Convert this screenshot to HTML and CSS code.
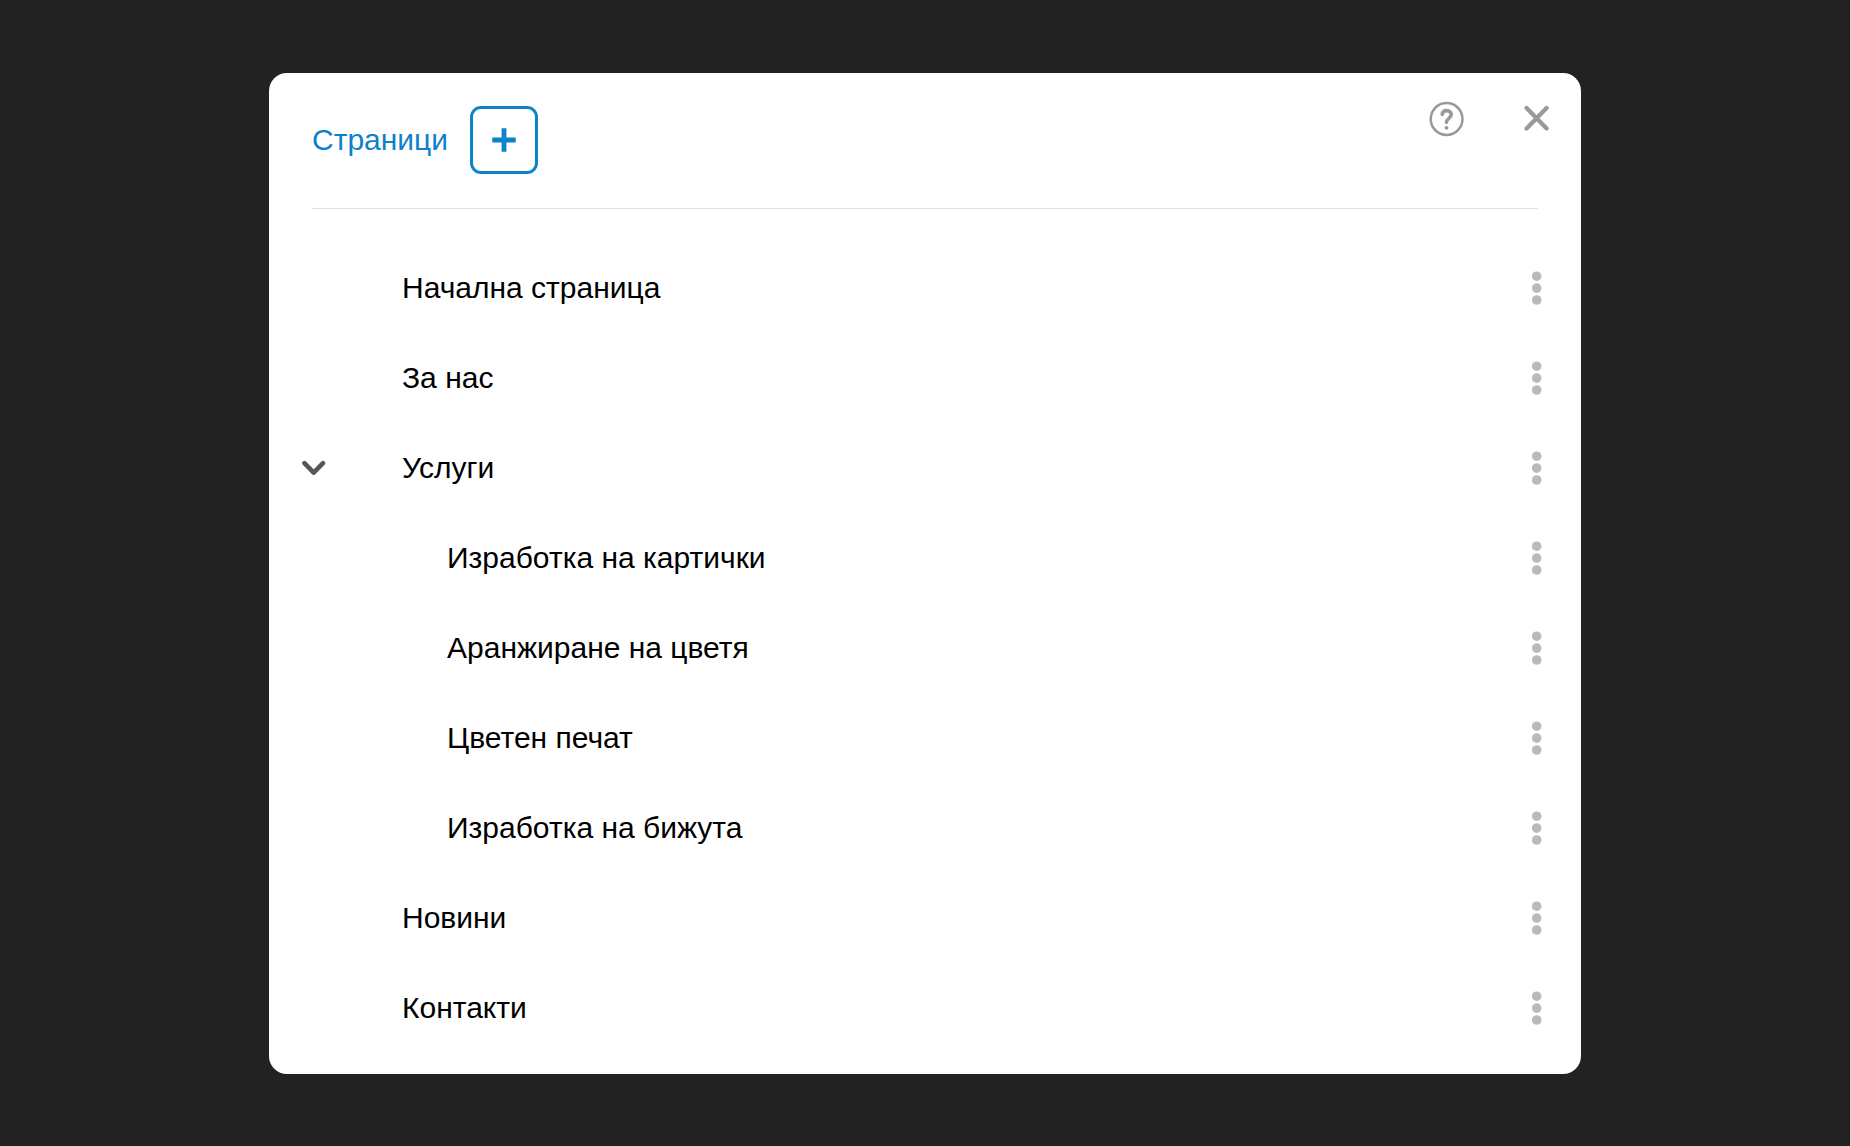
FILE: index.html
```html
<!DOCTYPE html>
<html lang="bg">
<head>
<meta charset="utf-8">
<meta name="viewport" content="width=device-width, initial-scale=1">
<title>Страници</title>
<link rel="stylesheet" href="styles.css">
</head>
<body>
<svg class="sprite" aria-hidden="true">
  <symbol id="dots" viewBox="0 0 10 34">
    <circle cx="4.7" cy="5.2" r="4.8"/><circle cx="4.7" cy="17.1" r="4.8"/><circle cx="4.7" cy="29" r="4.8"/>
  </symbol>
</svg>
<main class="panel">
  <header class="panel-header">
    <div class="heading">
      <h1 class="title">Страници</h1>
      <button class="add-button" type="button" aria-label="Добави страница">
        <svg width="24" height="24" viewBox="0 0 24 24"><path d="M12 0.3V23.7M0.3 12H23.7" fill="none" stroke="currentColor" stroke-width="4.8"/></svg>
      </button>
    </div>
    <div class="actions">
      <button class="icon-button" type="button" aria-label="Помощ">
        <svg width="34" height="34" viewBox="0 0 34 34" fill="none" stroke="currentColor"><circle cx="16.6" cy="17" r="15.9" stroke-width="2.5"/><path d="M12.2 12.5C12.2 10 14.1 8.6 16.6 8.6C19.3 8.6 21.2 10.2 21.2 12.6C21.2 16 16.5 16.6 16.5 20.3" stroke-width="3.6" stroke-linecap="round"/><circle cx="16.5" cy="25.8" r="1.9" fill="currentColor" stroke="none"/></svg>
      </button>
      <button class="icon-button" type="button" aria-label="Затвори">
        <svg width="24" height="24" viewBox="0 0 24 24"><path d="M1.6 1L21.6 21.4M21.6 1L1.6 21.4" fill="none" stroke="currentColor" stroke-width="4.3" stroke-linecap="round" overflow="visible"/></svg>
      </button>
    </div>
  </header>
  <hr class="divider">
  <ul class="pages">
    <li><div class="row"><a class="page-link" href="#home">Начална страница</a><button class="icon-button more" type="button" aria-label="Опции за Начална страница"><svg width="10" height="34"><use href="#dots"/></svg></button></div></li>
    <li><div class="row"><a class="page-link" href="#about">За нас</a><button class="icon-button more" type="button" aria-label="Опции за За нас"><svg width="10" height="34"><use href="#dots"/></svg></button></div></li>
    <li>
      <div class="row"><button class="icon-button toggle" type="button" aria-expanded="true" aria-label="Свий Услуги"><svg width="24" height="16" viewBox="0 0 24 16"><path d="M2.4 3.2L11.7 12.7L21 3.2" fill="none" stroke="currentColor" stroke-width="4.6" stroke-linecap="round" stroke-linejoin="round"/></svg></button><a class="page-link" href="#services">Услуги</a><button class="icon-button more" type="button" aria-label="Опции за Услуги"><svg width="10" height="34"><use href="#dots"/></svg></button></div>
      <ul class="pages-nested">
        <li><div class="row"><a class="page-link" href="#cards">Изработка на картички</a><button class="icon-button more" type="button" aria-label="Опции за Изработка на картички"><svg width="10" height="34"><use href="#dots"/></svg></button></div></li>
        <li><div class="row"><a class="page-link" href="#flowers">Аранжиране на цветя</a><button class="icon-button more" type="button" aria-label="Опции за Аранжиране на цветя"><svg width="10" height="34"><use href="#dots"/></svg></button></div></li>
        <li><div class="row"><a class="page-link" href="#print">Цветен печат</a><button class="icon-button more" type="button" aria-label="Опции за Цветен печат"><svg width="10" height="34"><use href="#dots"/></svg></button></div></li>
        <li><div class="row"><a class="page-link" href="#jewelry">Изработка на бижута</a><button class="icon-button more" type="button" aria-label="Опции за Изработка на бижута"><svg width="10" height="34"><use href="#dots"/></svg></button></div></li>
      </ul>
    </li>
    <li><div class="row"><a class="page-link" href="#news">Новини</a><button class="icon-button more" type="button" aria-label="Опции за Новини"><svg width="10" height="34"><use href="#dots"/></svg></button></div></li>
    <li><div class="row"><a class="page-link" href="#contacts">Контакти</a><button class="icon-button more" type="button" aria-label="Опции за Контакти"><svg width="10" height="34"><use href="#dots"/></svg></button></div></li>
  </ul>
</main>
</body>
</html>
```
FILE: styles.css
```css
* {
  box-sizing: border-box;
}

body {
  margin: 0;
  min-height: 100vh;
  padding: 24px;
  display: flex;
  align-items: center;
  justify-content: center;
  background: #222;
  color: #000;
  font-family: "Liberation Sans", Arial, sans-serif;
  font-size: 30px;
  line-height: 36px;
}

svg {
  display: block;
  overflow: visible;
}

.sprite {
  position: absolute;
  width: 0;
  height: 0;
}

.panel {
  width: 100%;
  max-width: 1312px;
  padding-bottom: 21px;
  background: #fff;
  border-radius: 18px;
}

.panel-header {
  display: flex;
  justify-content: space-between;
  align-items: flex-start;
  padding: 26px 24px 0 43px;
}

.heading {
  display: flex;
  align-items: center;
  gap: 22px;
  padding-top: 7px;
}

.title {
  margin: 0;
  font-size: 30px;
  font-weight: 400;
  color: #0f80ca;
}

.add-button {
  display: flex;
  align-items: center;
  justify-content: center;
  width: 68px;
  height: 68px;
  padding: 0;
  border: 3px solid #0b84cb;
  border-radius: 11px;
  background: none;
  color: #0b84cb;
  cursor: pointer;
}

.actions {
  display: flex;
  gap: 50px;
}

.icon-button {
  display: flex;
  flex: none;
  align-items: center;
  justify-content: center;
  width: 40px;
  height: 40px;
  padding: 0;
  border: 0;
  background: none;
  color: #999;
  cursor: pointer;
}

.divider {
  height: 1px;
  margin: 34px 43px;
  border: 0;
  background: #e3e3e3;
}

.pages,
.pages-nested {
  margin: 0;
  padding: 0;
  list-style: none;
}

.row {
  display: grid;
  grid-template-columns: 108px 1fr 40px;
  align-items: center;
  height: 90px;
  padding: 0 24px 0 25px;
}

.pages-nested {
  padding-left: 45px;
}

.toggle {
  color: #555;
}

.page-link {
  grid-column: 2;
  color: inherit;
  text-decoration: none;
}

.more {
  color: #bababa;
  fill: currentColor;
}
```
